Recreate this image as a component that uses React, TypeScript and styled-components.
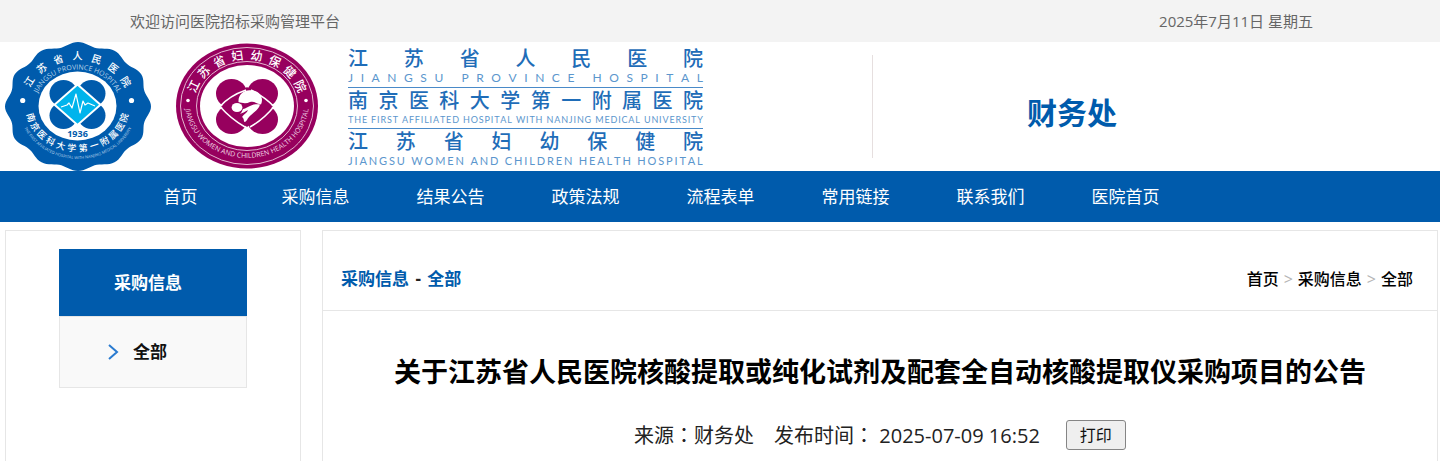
import React from 'react';
import styled, { createGlobalStyle } from 'styled-components';

const BLUE = '#005bac';
const MAGENTA = '#97005e';
const SANS = '"Open Sans", "Noto Sans CJK SC", sans-serif';

const GlobalStyle = createGlobalStyle`
  *, *::before, *::after { box-sizing: border-box; }
  body {
    margin: 0;
    background: #fff;
    color: #000;
    font-family: ${SANS};
    font-size: 17px;
  }
  a { color: inherit; text-decoration: none; }
  h1, h2, p, ul, ol { margin: 0; padding: 0; }
  ul, ol { list-style: none; }
`;

const Page = styled.div`
  display: flex;
  flex-direction: column;
  min-height: 100vh;
`;

const TopBar = styled.div`
  display: flex;
  justify-content: space-between;
  padding: 0 127px 0 130px;
  background: #f3f3f3;
  color: #666;
  font-size: 15px;
  line-height: 42px;
`;

const Header = styled.header`
  display: flex;
  align-items: flex-start;
`;

const Brand = styled.a`
  display: flex;
  flex: none;
  align-items: flex-start;
  padding-left: 5px;
`;

const Emblem = styled.svg`
  display: block;
  flex: none;
  font-family: ${SANS};
`;

const WomenEmblem = styled(Emblem)`
  margin: 1px 30px 0 25px;
`;

const Names = styled.div`
  display: flex;
  flex-direction: column;
  width: 355px;
  padding-top: 4px;
  color: #1f6db8;
`;

const NameGroup = styled.div`
  height: 41px;
  & + & { border-top: 1px solid #4a8ac8; }
`;

const NameZh = styled.div`
  font-size: 20px;
  font-weight: 500;
  line-height: 26px;
  text-align: justify;
  text-align-last: justify;
`;

const NameEn = styled.div<{ $size: number }>`
  display: flex;
  justify-content: space-between;
  color: #5b96cd;
  font-family: Lato, sans-serif;
  font-size: ${(p) => p.$size}px;
  line-height: 12px;
  white-space: pre;
`;

const Department = styled.div`
  display: flex;
  flex: none;
  align-items: center;
  height: 103px;
  margin: 13px 0 0 169px;
  padding: 8px 0 0 154px;
  border-left: 1px solid #e6dfdf;
  color: ${BLUE};
  font-size: 30px;
  font-weight: 700;
`;

const Nav = styled.nav`
  padding-left: 113px;
  background: ${BLUE};
  color: #fff;
`;

const NavList = styled.ul`
  display: flex;
`;

const NavItem = styled.li`
  width: 135px;
  line-height: 51px;
  text-align: center;
`;

const Body = styled.div`
  display: flex;
  flex: 1;
  gap: 21px;
  padding: 8px 2px 0 5px;
`;

const Panel = styled.div`
  border: 1px solid #e6e6e6;
  border-bottom: 0;
`;

const Sidebar = styled(Panel).attrs({ as: 'aside' })`
  flex: none;
  width: 296px;
  padding: 18px 53px;
`;

const SideTitle = styled.h2`
  padding-right: 10px;
  background: ${BLUE};
  color: #fff;
  font-size: 17px;
  line-height: 67px;
  text-align: center;
`;

const SideList = styled.ul`
  border: 1px solid #e6e6e6;
  background: #f9f9f9;
`;

const SideLink = styled.a`
  display: flex;
  align-items: center;
  gap: 14px;
  padding-left: 48px;
  color: #111;
  font-weight: 700;
  line-height: 70px;
`;

const Main = styled(Panel).attrs({ as: 'main' })`
  flex: 1;
  min-width: 0;
`;

const MainHead = styled.div`
  display: flex;
  align-items: center;
  justify-content: space-between;
  height: 80px;
  padding: 16px 24px 0 18px;
  border-bottom: 1px solid #e6e6e6;
`;

const SectionTitle = styled.h2`
  color: ${BLUE};
  font-size: 17px;
  line-height: 24px;
  & span {
    margin: 0 2px;
    color: #222;
  }
`;

const Crumbs = styled.ol`
  display: flex;
  gap: 5px;
  font-size: 16px;
  font-weight: 500;
  line-height: 24px;
`;

const Separator = styled.li`
  color: #b4b4b4;
  font-weight: 400;
`;

const Title = styled.h1`
  padding-top: 41px;
  font-size: 27px;
  line-height: 40px;
  text-align: center;
`;

const Meta = styled.div`
  display: flex;
  align-items: center;
  justify-content: center;
  padding-top: 28px;
  color: #222;
  font-size: 20px;
  line-height: 28px;
`;

const MetaItem = styled.span`
  margin-right: 20px;
`;

const Colon = styled.span`
  font-family: "Noto Sans CJK TC", sans-serif;
`;

const PrintButton = styled.button`
  height: 30px;
  margin-left: 6px;
  padding: 0 13px;
  border: 1px solid #858585;
  border-radius: 3px;
  background: #efefef;
  color: #111;
  font: 400 16px/26px ${SANS};
`;

type ArcProps = {
  text: string;
  cx: number;
  cy: number;
  rx: number;
  ry: number;
  spread: number;
  size: number;
  below?: boolean;
};

/* Sets each character upright on an elliptical arc, evenly over ±spread degrees. */
function ArcCharacters({ text, cx, cy, rx, ry, spread, size, below }: ArcProps) {
  const chars = Array.from(text);
  const side = below ? 1 : -1;
  return (
    <g fill="#fff" fontSize={size} fontWeight="500" textAnchor="middle" dominantBaseline="central">
      {chars.map((char, i) => {
        const deg = -spread + (2 * spread * i) / (chars.length - 1);
        const t = (deg * Math.PI) / 180;
        const x = cx + rx * Math.sin(t);
        const y = cy + side * ry * Math.cos(t);
        const turn = (Math.atan2(-side * ry * Math.sin(t), rx * Math.cos(t)) * 180) / Math.PI;
        return (
          <text key={i} transform={`translate(${x} ${y}) rotate(${turn})`}>{char}</text>
        );
      })}
    </g>
  );
}

/* Twelve-lobed outline of the provincial hospital's seal. */
const sealOutline = (() => {
  const points: string[] = [];
  for (let d = 0; d < 360; d += 2) {
    const t = (d * Math.PI) / 180;
    const k = 0.97 + 0.03 * Math.cos(12 * t);
    points.push(`${(73 + 73 * k * Math.sin(t)).toFixed(2)} ${(64.5 - 64.5 * k * Math.cos(t)).toFixed(2)}`);
  }
  return `M${points.join('L')}Z`;
})();

function ProvinceSeal() {
  return (
    <Emblem width="146" height="129" viewBox="0 0 146 129" role="img" aria-label="江苏省人民医院">
      <defs>
        <path id="province-top" d="M30 64A42.5 36.5 0 0 1 115 64" />
        <path id="province-bottom" d="M14 64A59 53 0 0 0 132 64" />
      </defs>
      <path d={sealOutline} fill={BLUE} />
      <ellipse cx="72.5" cy="64" rx="39" ry="34.5" fill="#fff" />
      <g fill={BLUE}>
        <ellipse cx="58.5" cy="51.5" rx="14" ry="13.5" />
        <ellipse cx="86.5" cy="51.5" rx="14" ry="13.5" />
        <ellipse cx="58.5" cy="73.5" rx="14" ry="13.5" />
        <ellipse cx="86.5" cy="73.5" rx="14" ry="13.5" />
      </g>
      <path d="M72.5 42.5L95.5 62.7L72.5 83L49.5 62.7Z" fill="#00b4ec" stroke="#fff" strokeWidth="2" />
      <path
        d="M56 65L62 63L64 61L67 66L71 52L75 71L78 59L80 63L83 61L90 64"
        fill="none" stroke="#fff" strokeWidth="1.2" strokeLinejoin="round"
      />
      <text x="72.5" y="95" fill={BLUE} fontSize="9" fontWeight="700" textAnchor="middle">1936</text>
      <circle cx="17.7" cy="58.5" r="2.6" fill="#fff" />
      <circle cx="126.5" cy="58.5" r="2.6" fill="#fff" />
      <ArcCharacters text="江苏省人民医院" cx={72.5} cy={65} rx={56} ry={51} spread={60} size={10} />
      <ArcCharacters text="南京医科大学第一附属医院" cx={72.5} cy={65} rx={48} ry={41} spread={75} size={9} below />
      <g fill="#b9d3ea" textAnchor="middle">
        <text fontSize="7"><textPath href="#province-top" startOffset="50%">JIANGSU PROVINCE HOSPITAL</textPath></text>
        <text fontSize="4"><textPath href="#province-bottom" startOffset="50%">THE FIRST AFFILIATED HOSPITAL WITH NANJING MEDICAL UNIVERSITY</textPath></text>
      </g>
    </Emblem>
  );
}

function WomenSeal() {
  return (
    <WomenEmblem width="142" height="126" viewBox="0 0 142 126" role="img" aria-label="江苏省妇幼保健院">
      <defs>
        <path id="women-bottom" d="M9 60A62 55 0 0 0 133 60" />
      </defs>
      <ellipse cx="71" cy="63" rx="71" ry="62.5" fill={MAGENTA} />
      <ellipse cx="71" cy="63" rx="66.5" ry="58.5" fill="none" stroke="#e3b6d0" strokeWidth="1" />
      <ellipse cx="71" cy="63" rx="50.5" ry="44.5" fill="none" stroke="#e3b6d0" strokeWidth="1" />
      <ellipse cx="71" cy="63" rx="47" ry="41" fill="#fff" />
      <g fill={MAGENTA}>
        <ellipse cx="55.5" cy="50.5" rx="15.5" ry="14.5" />
        <ellipse cx="86.5" cy="50.5" rx="15.5" ry="14.5" />
        <ellipse cx="55.5" cy="76.5" rx="15.5" ry="14.5" />
        <ellipse cx="86.5" cy="76.5" rx="15.5" ry="14.5" />
        <path d="M71 44L97 63.5L71 84L45 63.5Z" />
      </g>
      <g fill="none" stroke="#fff" strokeWidth="1.5" strokeLinejoin="round">
        <path d="M70 47Q53 53 44 63.5Q55 76 69 84" />
        <path d="M75 47Q89 54 98 63.5Q88 76 74 84" />
      </g>
      <g fill="#fff">
        <path d="M62.5 59C62 51 69 46 76 47.5C84 48 88 55 85 61.5C81 61 78 57.5 74 59C70 61 66 60 62.5 59Z" />
        <path d="M67 66C71 66 75 60 84 61.5C83 67 76 70 73 74C71 76 71 78 69 79C67 79 69 76 66 74C68 71 71 70 72 67C69 69 66 70 64 71C66 69 66 68 67 66Z" />
        <ellipse cx="61" cy="64.5" rx="5.4" ry="4.6" />
      </g>
      <circle cx="12" cy="57.5" r="1.8" fill="#fff" />
      <circle cx="130" cy="57.5" r="1.8" fill="#fff" />
      <ArcCharacters text="江苏省妇幼保健院" cx={71} cy={63} rx={58} ry={51} spread={67} size={12} />
      <text fill="#f0d6e4" fontSize="7" textAnchor="middle">
        <textPath href="#women-bottom" startOffset="50%">JIANGSU WOMEN AND CHILDREN HEALTH HOSPITAL</textPath>
      </text>
    </WomenEmblem>
  );
}

const hospitalNames = [
  { zh: '江苏省人民医院', en: 'JIANGSU PROVINCE HOSPITAL', size: 12 },
  { zh: '南京医科大学第一附属医院', en: 'THE FIRST AFFILIATED HOSPITAL WITH NANJING MEDICAL UNIVERSITY', size: 9 },
  { zh: '江苏省妇幼保健院', en: 'JIANGSU WOMEN AND CHILDREN HEALTH HOSPITAL', size: 11 },
];

const navItems = ['首页', '采购信息', '结果公告', '政策法规', '流程表单', '常用链接', '联系我们', '医院首页'];

export default function App() {
  return (
    <Page>
      <GlobalStyle />
      <TopBar>
        <span>欢迎访问医院招标采购管理平台</span>
        <time dateTime="2025-07-11">2025年7月11日 星期五</time>
      </TopBar>
      <Header>
        <Brand href="#">
          <ProvinceSeal />
          <WomenSeal />
          <Names>
            {hospitalNames.map(({ zh, en, size }) => (
              <NameGroup key={zh}>
                <NameZh>{zh}</NameZh>
                <NameEn $size={size} aria-label={en}>
                  {Array.from(en).map((letter, i) => <span key={i}>{letter}</span>)}
                </NameEn>
              </NameGroup>
            ))}
          </Names>
        </Brand>
        <Department>财务处</Department>
      </Header>
      <Nav>
        <NavList>
          {navItems.map((label) => (
            <NavItem key={label}><a href="#">{label}</a></NavItem>
          ))}
        </NavList>
      </Nav>
      <Body>
        <Sidebar>
          <SideTitle>采购信息</SideTitle>
          <SideList>
            <li>
              <SideLink href="#">
                <svg width="11" height="16" viewBox="0 0 11 16" fill="none" stroke="#2a7bd0" strokeWidth="2" aria-hidden="true">
                  <path d="M1 1L9 8L1 15" />
                </svg>
                全部
              </SideLink>
            </li>
          </SideList>
        </Sidebar>
        <Main>
          <MainHead>
            <SectionTitle>采购信息 <span>-</span> 全部</SectionTitle>
            <Crumbs>
              <li><a href="#">首页</a></li>
              <Separator aria-hidden="true">&gt;</Separator>
              <li><a href="#">采购信息</a></li>
              <Separator aria-hidden="true">&gt;</Separator>
              <li><a href="#">全部</a></li>
            </Crumbs>
          </MainHead>
          <Title>关于江苏省人民医院核酸提取或纯化试剂及配套全自动核酸提取仪采购项目的公告</Title>
          <Meta>
            <MetaItem>来源<Colon>：</Colon>财务处</MetaItem>
            <MetaItem>发布时间<Colon>：</Colon> <time dateTime="2025-07-09T16:52">2025-07-09 16:52</time></MetaItem>
            <PrintButton type="button">打印</PrintButton>
          </Meta>
        </Main>
      </Body>
    </Page>
  );
}
